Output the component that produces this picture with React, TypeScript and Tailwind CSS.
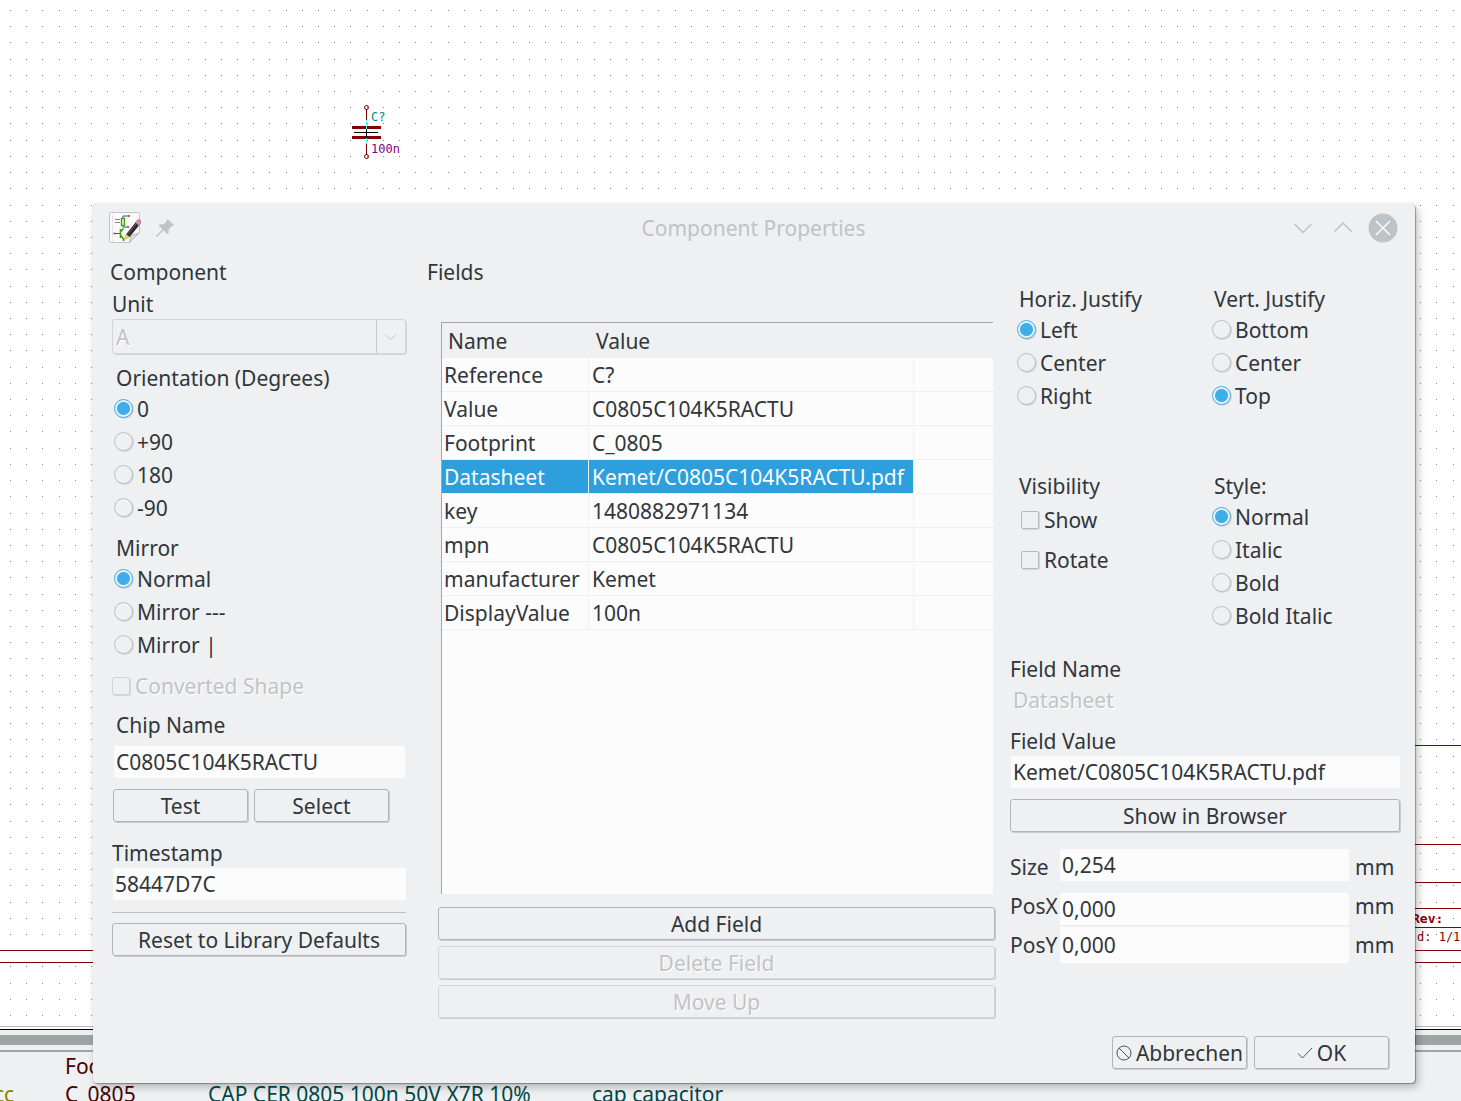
import { useState, type ReactNode } from 'react';

const GRID = 16.21;

function gridPath(cols: number, rows: number) {
  let d = '';
  for (let r = 0; r < rows; r++) {
    for (let c = 0; c < cols; c++) {
      d += `M${Math.round(10 + c * GRID)} ${Math.round(10 + r * GRID)}h1v1h-1z`;
    }
  }
  return d;
}

function Sheet() {
  return (
    <svg className="absolute inset-0 h-full w-full" shapeRendering="crispEdges" aria-hidden="true">
      <path d={gridPath(160, 63)} fill="#858585" />
      <g fill="none" stroke="#840000">
        <path d="M0 950.5H1461M0 962.5H1461M1380 745.5H1461M1380 844.5H1461M1380 882.5H1461M1380 908.5H1461M1380 927.5H1461" />
        <path d="M366.5 109V120M366.5 144V155" />
        <path d="M352 127.5H381M352 137.5H381" strokeWidth="3" />
        <circle cx="366.5" cy="107.5" r="2" shapeRendering="auto" />
        <circle cx="366.5" cy="156.5" r="2" shapeRendering="auto" />
      </g>
      <path d="M366.5 120V144" stroke="#5ff" />
      <path d="M354 132.5H378M366.5 129V138" stroke="#000" />
      <g fontFamily='"DejaVu Sans Mono", monospace' fontSize="12">
        <text x="371" y="121" fill="#008484">C?</text>
        <text x="371" y="153" fill="#840084">100n</text>
        <text x="1412" y="923" fill="#840000" fontSize="13" fontWeight="700">Rev:</text>
        <text x="1417" y="941" fill="#840000" fontSize="12">d: 1/1</text>
      </g>
    </svg>
  );
}

function AppIcon() {
  return (
    <svg className="h-8 w-8" viewBox="0 0 32 32" fill="none" aria-hidden="true">
      <path d="M1.500 .5h28a1 1 0 0 1 1 1v19l-10 10h-19a1 1 0 0 1-1-1v-28a1 1 0 0 1 1-1z" fill="#fafafa" stroke="#c2c3c4" />
      <path d="M20.500 30.500l1.500-7 8-2.500z" fill="#dcdddd" stroke="#b8b9ba" />
      <path d="M3.500 2v27" stroke="#d5d5d5" strokeDasharray="1 1" />
      <path d="M6 7.500h5M6 10.500h5" stroke="#888" />
      <path d="M14 6V4h5M14 13v2h4M6 21.500h5" stroke="#2a5ba8" />
      <path d="M19 4h2M18 15h2M4.500 21.500h2" stroke="#d22" strokeWidth="1.500" />
      <rect x="12.500" y="6.500" width="3" height="7" fill="#d9f2c8" stroke="#4e9a06" strokeWidth="1.300" />
      <path d="M11.500 17v9M11.500 20l3-3.500M11.500 23l3 4v2" stroke="#4e9a06" strokeWidth="1.600" />
      <path d="M17 22.500L26.500 10.500l3.500 3L20.500 25z" fill="#2b2b2b" />
      <path d="M18.500 22.500L27 12" stroke="#666" />
      <path d="M17 22.500l3.500 2.500-5 2.500z" fill="#f1d479" stroke="#a98b3a" strokeWidth=".5" />
      <path d="M26.500 10.500l1.500-2a2.300 2.300 0 0 1 3.500 3L30 13.500z" fill="#d68bb8" stroke="#94638a" strokeWidth=".7" />
    </svg>
  );
}

function Radio({ name, label, checked, onChange }: { name: string; label: string; checked: boolean; onChange: () => void }) {
  return (
    <label className="flex h-[33px] items-center gap-1 leading-[30px] whitespace-pre">
      <input
        type="radio"
        name={name}
        checked={checked}
        onChange={onChange}
        className="h-[19px] w-[19px] shrink-0 appearance-none rounded-full border border-[#bcbfc2] bg-[#eff0f1] shadow-[1px_1px_0_#d3d5d6] checked:border-[#3daee9] checked:bg-[radial-gradient(circle,#3daee9_6px,#eff0f1_7px)]"
      />
      {label}
    </label>
  );
}

function RadioGroup({ title, name, options, initial, listClass = '' }: { title: string; name: string; options: string[]; initial: string; listClass?: string }) {
  const [value, setValue] = useState(initial);
  return (
    <fieldset className={listClass}>
      <legend className="pl-0.5 leading-[28px]">{title}</legend>
      {options.map((o) => (
        <Radio key={o} name={name} label={o} checked={o === value} onChange={() => setValue(o)} />
      ))}
    </fieldset>
  );
}

function Check({ label, disabled }: { label: string; disabled?: boolean }) {
  return (
    <label className={`flex h-[33px] items-center gap-[5px] ${disabled ? 'text-[#c0c4c7] [text-shadow:1px_1px_0_#fff]' : ''}`}>
      <input
        type="checkbox"
        disabled={disabled}
        className="h-[18px] w-[18px] shrink-0 appearance-none rounded-xs border border-[#b8bbbe] shadow-[1px_1px_0_#d3d5d6] checked:bg-[#3daee9] disabled:border-[#d3d5d6]"
      />
      {label}
    </label>
  );
}

function Button({ children, className = '', disabled }: { children: ReactNode; className?: string; disabled?: boolean }) {
  return (
    <button
      type="button"
      disabled={disabled}
      className={`flex h-[33px] items-center justify-center gap-1 rounded-[3px] border border-[#b1b4b7] leading-[30px] whitespace-nowrap shadow-[1px_1px_0_#c9cbcd] disabled:border-[#d3d5d6] disabled:text-[#c0c4c7] disabled:[text-shadow:1px_1px_0_#fff] ${className}`}
    >
      {children}
    </button>
  );
}

const inputClass = 'block h-8 min-w-0 bg-[#fcfcfc] px-0.5 outline-none';

const rows = [
  ['Reference', 'C?'],
  ['Value', 'C0805C104K5RACTU'],
  ['Footprint', 'C_0805'],
  ['Datasheet', 'Kemet/C0805C104K5RACTU.pdf'],
  ['key', '1480882971134'],
  ['mpn', 'C0805C104K5RACTU'],
  ['manufacturer', 'Kemet'],
  ['DisplayValue', '100n'],
];

function TitleBar() {
  return (
    <header className="grid h-12 grid-cols-[1fr_auto_1fr] items-center pr-[17px] pl-4 text-[#bdc3c7]">
      <div className="flex items-center gap-[15px]">
        <AppIcon />
        <button type="button" aria-label="Keep above">
          <svg className="h-[18px] w-[18px]" viewBox="0 0 18 18" fill="#bdc3c7">
            <path d="M11.500 0L18 6l-1 1-1-.3-3.500 4 .3 3.300-1.300 1.300-4-4L1.500 17.500 0 18l.5-1.500 6-6.200-4-3.800L4 5.200l3.400.2 3.800-3.600L10.500 1z" />
          </svg>
        </button>
      </div>
      <h1>Component Properties</h1>
      <div className="flex items-center justify-end gap-4">
        <button type="button" aria-label="Minimize">
          <svg className="h-6 w-6" viewBox="0 0 24 24" fill="none" stroke="#bdc3c7" strokeWidth="1.500">
            <path d="M3.500 8l8.500 8.500L20.500 8" />
          </svg>
        </button>
        <button type="button" aria-label="Maximize">
          <svg className="h-6 w-6" viewBox="0 0 24 24" fill="none" stroke="#bdc3c7" strokeWidth="1.500">
            <path d="M3.500 15.500L12 7l8.500 8.500" />
          </svg>
        </button>
        <button type="button" aria-label="Close" className="-ml-[3px]">
          <svg className="h-[30px] w-[30px]" viewBox="0 0 30 30" fill="none">
            <circle cx="15" cy="15" r="14.500" fill="#bdc3c7" />
            <path d="M8 8l14 14M22 8L8 22" stroke="#fcfcfc" strokeWidth="1.500" />
          </svg>
        </button>
      </div>
    </header>
  );
}

function ComponentPanel() {
  return (
    <section className="flex w-[294px] shrink-0 flex-col pt-[5px]">
      <h2 className="-ml-0.5 leading-[30px]">Component</h2>
      <label htmlFor="unit" className="mt-0.5 leading-[30px]">Unit</label>
      <div className="relative">
        <select
          id="unit"
          disabled
          className="block h-[35px] w-full appearance-none rounded-[3px] border border-[#d3d5d6] px-[3px] text-[#c0c4c7] opacity-100 shadow-[1px_1px_0_#d3d5d6] [text-shadow:1px_1px_0_#fff]"
        >
          <option>A</option>
        </select>
        <svg className="pointer-events-none absolute top-px right-0 h-[33px] w-[30px]" viewBox="0 0 30 33" fill="none" stroke="#c5c8cb">
          <path d="M.5 0v33M9 14.500l5.500 5 5.500-5" />
        </svg>
      </div>
      <div className="mt-2.5 flex flex-col gap-2.5 pl-0.5">
        <RadioGroup title="Orientation (Degrees)" name="orientation" options={['0', '+90', '180', '-90']} initial="0" />
        <RadioGroup title="Mirror" name="mirror" options={['Normal', 'Mirror ---', 'Mirror |']} initial="Normal" />
      </div>
      <div className="mt-2">
        <Check label="Converted Shape" disabled />
      </div>
      <label htmlFor="chip" className="mt-2 ml-1 leading-[30px]">Chip Name</label>
      <input id="chip" defaultValue="C0805C104K5RACTU" className={`ml-0.5 mr-px mt-1.5 ${inputClass}`} />
      <div className="mt-[11px] flex gap-1.5 pr-[17px] pl-px">
        <Button className="flex-1">Test</Button>
        <Button className="flex-1">Select</Button>
      </div>
      <label htmlFor="stamp" className="mt-4 leading-[30px]">Timestamp</label>
      <input id="stamp" defaultValue="58447D7C" className={`ml-px ${inputClass}`} />
      <hr className="mt-3 border-[#bcbfc1]" />
      <Button className="mt-2.5">Reset to Library Defaults</Button>
    </section>
  );
}

function FieldsPanel() {
  const [selected, setSelected] = useState('Datasheet');
  return (
    <section className="flex min-w-0 flex-1 flex-col pt-[5px]">
      <h2 className="leading-[30px]">Fields</h2>
      <div className="mt-[35px] mr-[3px] ml-3.5 h-[572px] border-t border-l border-[#a3a6a9] bg-[#fcfcfc]">
        <table className="w-full table-fixed border-separate border-spacing-0 text-left">
          <colgroup>
            <col className="w-[147px]" />
            <col className="w-[325px]" />
            <col />
          </colgroup>
          <thead>
            <tr className="h-[35px] bg-[#eff0f1]">
              <th className="p-0 pl-1.5 font-normal">Name</th>
              <th className="p-0 pl-[7px] font-normal">Value</th>
              <th className="p-0" />
            </tr>
          </thead>
          <tbody>
            {rows.map(([n, v]) => {
              const cell = n === selected ? 'bg-[#2d9fdd] text-[#fcfcfc]' : '';
              return (
                <tr key={n} className="h-[34px] leading-[30px]" onClick={() => setSelected(n)}>
                  <td className={`border-r border-b border-[#eff0f1] p-0 pl-0.5 ${cell}`}>{n}</td>
                  <td className={`border-r border-b border-[#eff0f1] p-0 pl-[3px] ${cell}`}>{v}</td>
                  <td className="border-b border-[#eff0f1] p-0" />
                </tr>
              );
            })}
          </tbody>
        </table>
      </div>
      <div className="mt-[13px] mr-px ml-[11px] flex flex-col gap-1.5">
        <Button>Add Field</Button>
        <Button disabled>Delete Field</Button>
        <Button disabled>Move Up</Button>
      </div>
    </section>
  );
}

function PropertiesPanel() {
  return (
    <section className="flex w-[390px] shrink-0 flex-col pt-[33px]">
      <div className="grid grid-cols-[195px_1fr] gap-y-[60px] pl-[7px]">
        <RadioGroup title="Horiz. Justify" name="horiz" options={['Left', 'Center', 'Right']} initial="Left" />
        <RadioGroup title="Vert. Justify" name="vert" options={['Bottom', 'Center', 'Top']} initial="Top" />
        <fieldset>
          <legend className="pl-0.5 leading-[28px]">Visibility</legend>
          <div className="mt-[3px] flex flex-col gap-[7px] pl-1">
            <Check label="Show" />
            <Check label="Rotate" />
          </div>
        </fieldset>
        <RadioGroup title="Style:" name="style" options={['Normal', 'Italic', 'Bold', 'Bold Italic']} initial="Normal" />
      </div>
      <div className="mt-[22px] leading-[30px]">Field Name</div>
      <div className="mt-px pl-[3px] leading-[30px] text-[#c0c4c7] [text-shadow:1px_1px_0_#fff]">Datasheet</div>
      <label htmlFor="fieldvalue" className="mt-[11px] leading-[30px]">Field Value</label>
      <input id="fieldvalue" defaultValue="Kemet/C0805C104K5RACTU.pdf" className={`ml-px ${inputClass}`} />
      <Button className="mt-[11px]">Show in Browser</Button>
      <div className="mt-4 flex">
        <div className="flex w-[50px] flex-col leading-[39px]">
          <label htmlFor="size">Size</label>
          <label htmlFor="posx">PosX</label>
          <label htmlFor="posy">PosY</label>
        </div>
        <div className="flex min-w-0 flex-1 flex-col pt-px">
          <input id="size" defaultValue="0,254" className={inputClass} />
          <input id="posx" defaultValue="0,000" className={`mt-3 ${inputClass}`} />
          <input id="posy" defaultValue="0,000" className="mt-0.5 block h-9 min-w-0 bg-[#fcfcfc] px-0.5 outline-none" />
        </div>
        <div className="flex w-[51px] flex-col pl-1.5 leading-[39px]">
          <span>mm</span>
          <span>mm</span>
          <span>mm</span>
        </div>
      </div>
    </section>
  );
}

export default function App() {
  return (
    <div className="relative flex h-screen flex-col overflow-hidden bg-white font-['Noto_Sans',sans-serif] text-[21px] leading-[30px] text-[#31363b]">
      <main className="relative h-[1026px] shrink-0">
        <Sheet />
      </main>
      <footer className="shrink-0 bg-[#eff0f1]">
        <div className="h-1 border-t border-b border-t-[#bbb] border-b-black bg-white" />
        <div className="mt-[5px] h-2.5 bg-[#9fa4a6]" />
        <div className="mt-[5px] h-0.5 bg-[#9fa4a6]" />
        <div className="grid grid-cols-[65px_143px_384px_1fr] leading-[28px] whitespace-nowrap">
          <span />
          <span className="text-[#480000]">Footprint</span>
          <span />
          <span />
          <span className="-ml-1.5 text-[#848400]">cc</span>
          <span className="text-[#480000]">C_0805</span>
          <span className="text-[#004848]">CAP CER 0805 100n 50V X7R 10%</span>
          <span className="text-[#004848]">cap capacitor</span>
        </div>
      </footer>

      <div
        role="dialog"
        aria-label="Component Properties"
        className="absolute top-[204px] right-[46px] left-[93px] rounded-[4px] bg-[#eff0f1] pb-3.5 shadow-[1px_1px_1px_rgba(0,0,0,0.3),3px_4px_8px_rgba(0,0,0,0.25),0_0_1px_rgba(0,0,0,0.3)]"
      >
        <TitleBar />
        <div className="flex pr-[15px] pl-[19px]">
          <ComponentPanel />
          <div className="w-[21px] shrink-0" />
          <FieldsPanel />
          <div className="w-3.5 shrink-0" />
          <PropertiesPanel />
        </div>
        <div className="mt-[18px] flex justify-end gap-[7px] pr-[26px]">
          <Button className="w-[135px]">
            <svg className="h-4 w-4 shrink-0" viewBox="0 0 16 16" fill="none" stroke="#4d5257">
              <circle cx="8" cy="8" r="7" />
              <path d="M3 3l10 10" />
            </svg>
            Abbrechen
          </Button>
          <Button className="w-[135px]">
            <svg className="h-4 w-4 shrink-0" viewBox="0 0 16 16" fill="none" stroke="#4d5257">
              <path d="M1 8.500l4.500 4.500L15 3" />
            </svg>
            OK
          </Button>
        </div>
      </div>
    </div>
  );
}
